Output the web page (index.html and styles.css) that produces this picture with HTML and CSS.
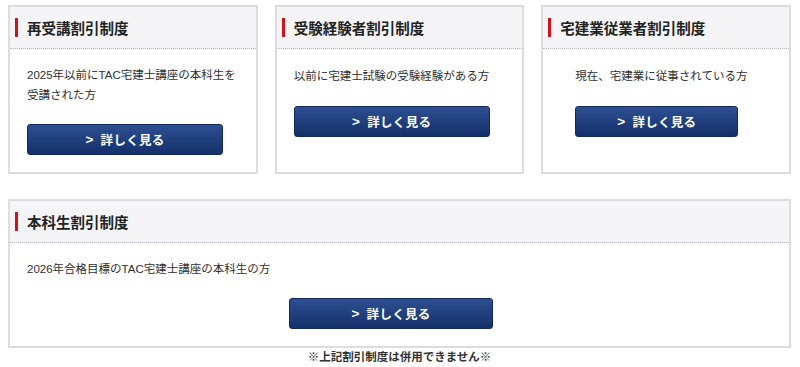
FILE: index.html
```html
<!DOCTYPE html>
<html lang="ja">
<head>
<meta charset="utf-8">
<title>割引制度</title>
<link rel="stylesheet" href="styles.css">
</head>
<body>
<div class="page">
  <div class="row">
    <section class="card">
      <h3 class="card__title">再受講割引制度</h3>
      <div class="card__body">
        <p class="card__text">2025年以前にTAC宅建士講座の本科生を<br>受講された方</p>
        <a class="btn" href="#"><span class="btn__arrow">&gt;</span>詳しく見る</a>
      </div>
    </section>
    <section class="card">
      <h3 class="card__title">受験経験者割引制度</h3>
      <div class="card__body card__body--single">
        <p class="card__text">以前に宅建士試験の受験経験がある方</p>
        <a class="btn" href="#"><span class="btn__arrow">&gt;</span>詳しく見る</a>
      </div>
    </section>
    <section class="card">
      <h3 class="card__title">宅建業従業者割引制度</h3>
      <div class="card__body card__body--single card__body--indent">
        <p class="card__text">現在、宅建業に従事されている方</p>
        <a class="btn btn--narrow" href="#"><span class="btn__arrow">&gt;</span>詳しく見る</a>
      </div>
    </section>
  </div>
  <section class="card card--full">
    <h3 class="card__title">本科生割引制度</h3>
    <div class="card__body card__body--full">
      <p class="card__text">2026年合格目標のTAC宅建士講座の本科生の方</p>
      <a class="btn btn--center" href="#"><span class="btn__arrow">&gt;</span>詳しく見る</a>
    </div>
  </section>
  <p class="note">※上記割引制度は併用できません※</p>
</div>
</body>
</html>
```
FILE: styles.css
```css
html, body {
  margin: 0;
  padding: 0;
  background: #ffffff;
}
body {
  font-family: "Liberation Sans", "Noto Sans CJK JP", sans-serif;
  color: #333333;
}
.page {
  width: 783px;
  padding: 5px 0 0 8px;
}
.row {
  display: grid;
  grid-template-columns: 1fr 1fr 1fr;
  column-gap: 17px;
  margin-bottom: 25px;
}
.card {
  border: 2px solid #dcdce1;
  background: #ffffff;
  display: flex;
  flex-direction: column;
}
.card__title {
  margin: 0;
  height: 41px;
  background: #f5f5f8;
  border-bottom: 1px dotted #b9b9c3;
  display: flex;
  align-items: center;
  padding-left: 5px;
  font-family: "Liberation Sans", "Noto Sans CJK JP", sans-serif;
  font-size: 14.5px;
  font-weight: bold;
  color: #222222;
}
.card__title::before {
  content: "";
  width: 3px;
  height: 19px;
  background: #d0121b;
  margin-right: 9px;
  flex: none;
}
.card__body {
  padding: 16px 17px 17px 17px;
  display: flex;
  flex-direction: column;
  align-items: flex-start;
}
.card__body--single {
  padding-top: 17px;
}
.card__body--single .card__text {
  margin-bottom: 20px;
}
.card__body--indent {
  padding-left: 32px;
}
.card__body--full {
  padding-right: 34px;
}
.card__text {
  margin: 0 0 19px 0;
  font-size: 11.5px;
  line-height: 20px;
  color: #2f2f2f;
}
.btn {
  display: flex;
  align-items: center;
  justify-content: center;
  width: 196px;
  height: 31px;
  box-sizing: border-box;
  border-radius: 3px;
  background: linear-gradient(#2d4f91, #14306a);
  border: 1px solid #13295a;
  color: #ffffff;
  text-decoration: none;
  font-size: 12.5px;
  font-weight: bold;
  letter-spacing: 0.3px;
}
.btn__arrow {
  font-weight: bold;
  font-size: 13.5px;
  margin-right: 7px;
}
.btn--narrow {
  width: 163px;
}
.btn--center {
  width: 204px;
  align-self: center;
}
.note {
  margin: 1px 0 0 0;
  text-align: center;
  font-size: 11.5px;
  font-weight: bold;
  line-height: 16px;
  color: #333333;
}
```
